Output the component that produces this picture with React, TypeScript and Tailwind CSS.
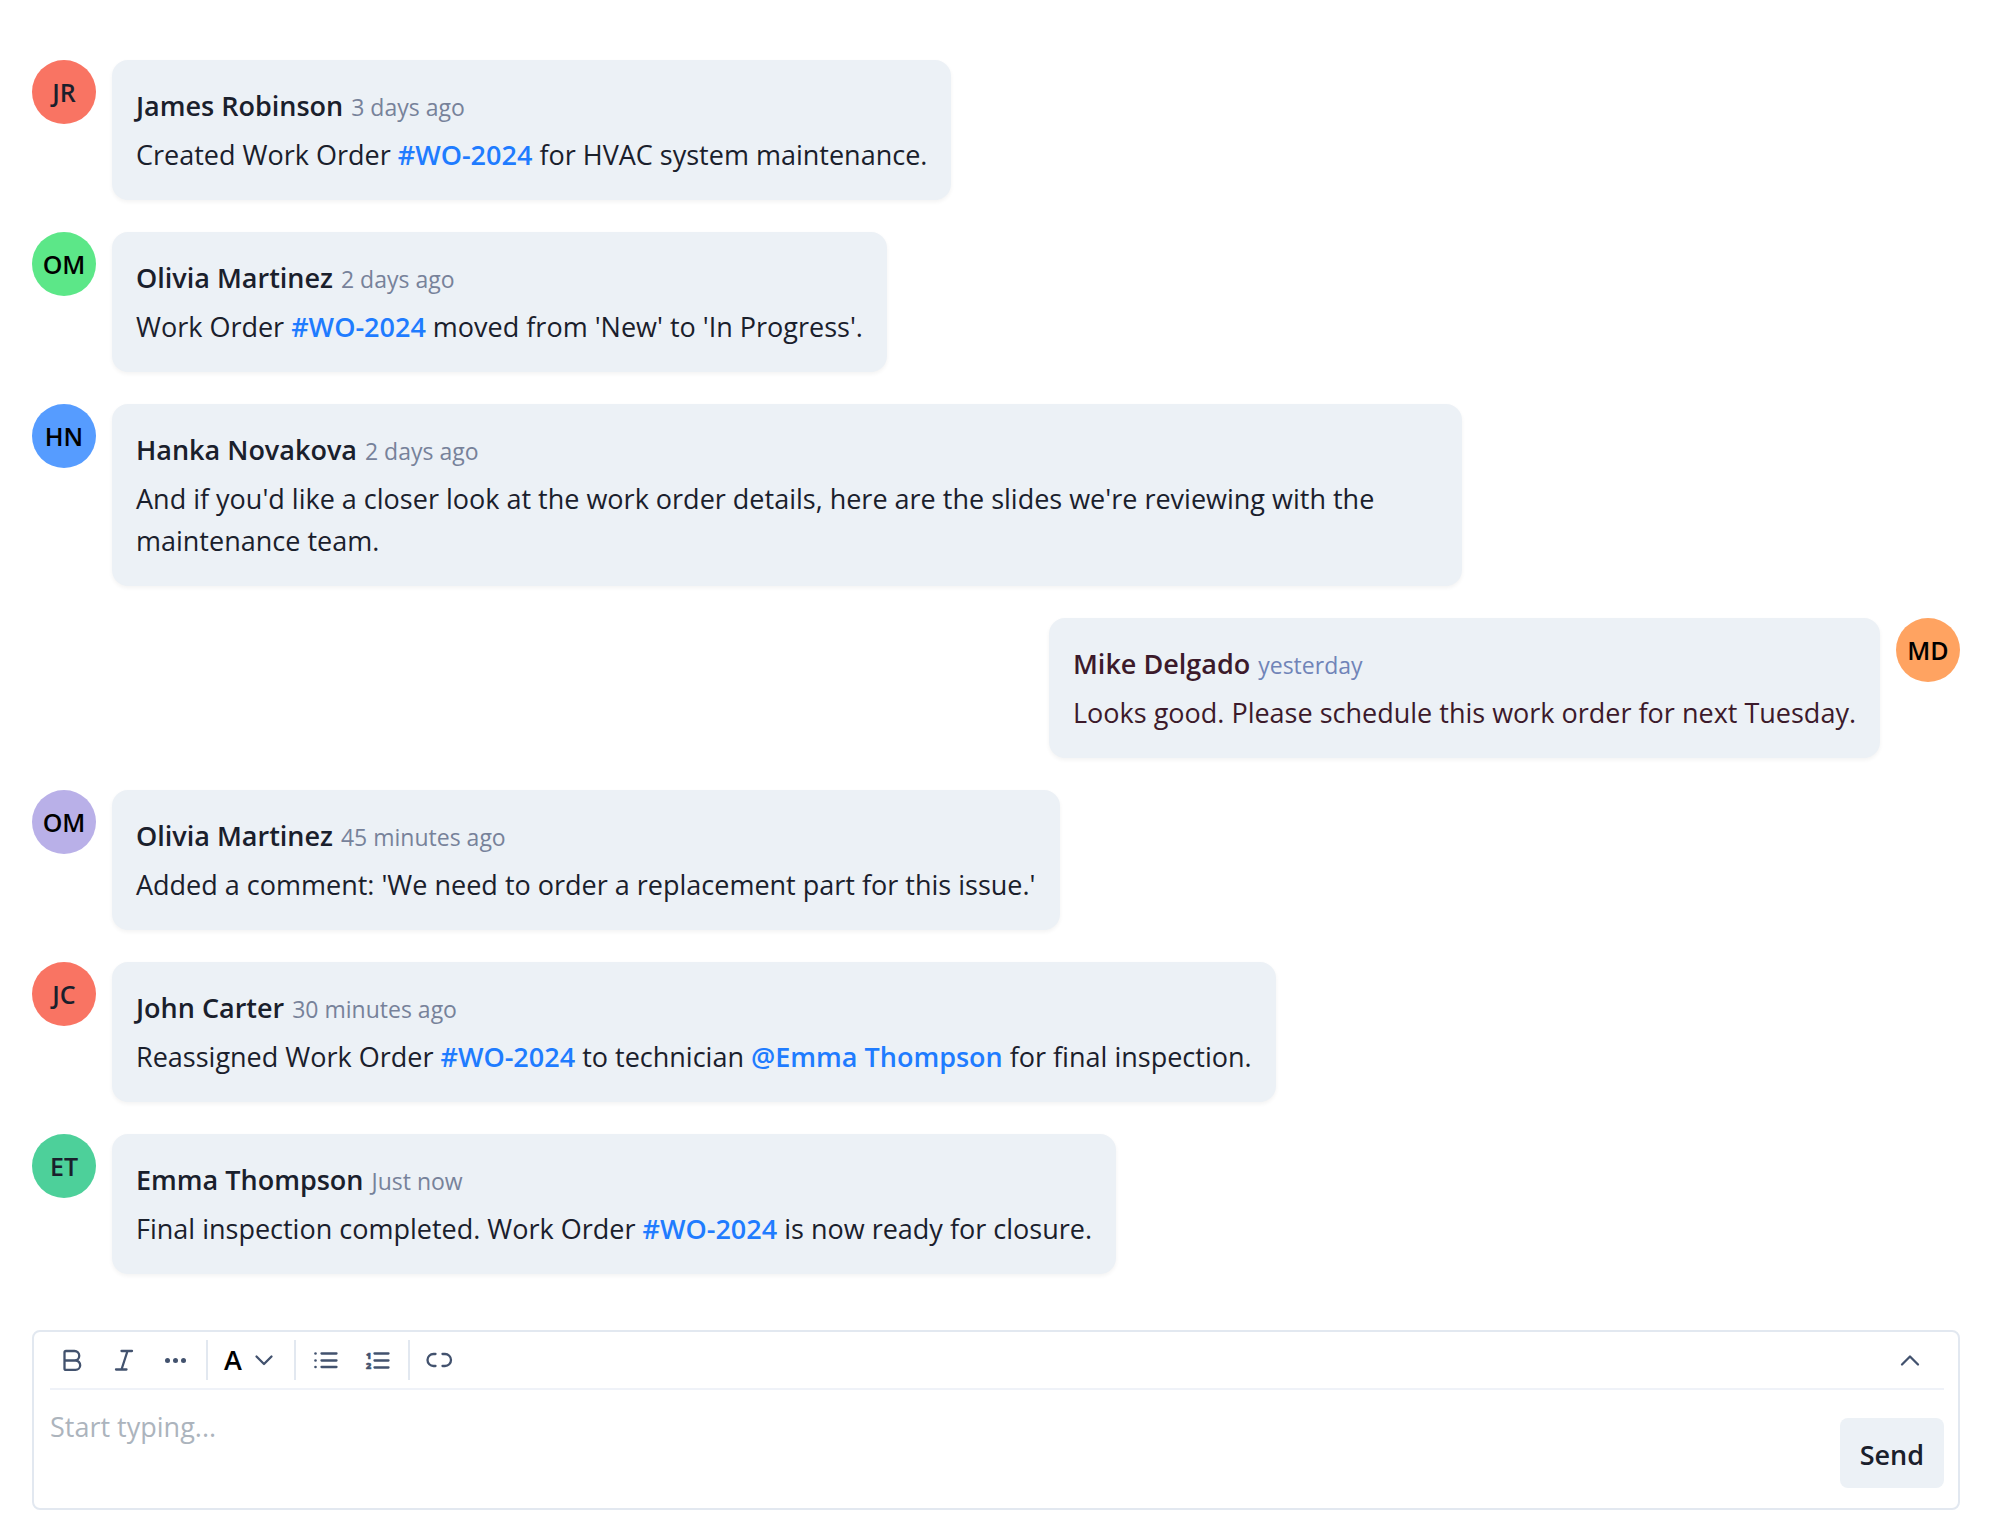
import { useState, type ReactNode } from 'react'
import clsx from 'clsx'

interface Message {
  id: number
  author: string
  initials: string
  time: string
  avatarClass: string
  own?: boolean
  body: ReactNode
}

function Mention({ children }: { children: ReactNode }) {
  return (
    <a href="#" className="font-semibold text-[#1f7cff]">
      {children}
    </a>
  )
}

const messages: Message[] = [
  {
    id: 1,
    author: 'James Robinson',
    initials: 'JR',
    time: '3 days ago',
    avatarClass: 'bg-[#f97463] text-[#1a202c]',
    body: <>Created Work Order <Mention>#WO-2024</Mention> for HVAC system maintenance.</>,
  },
  {
    id: 2,
    author: 'Olivia Martinez',
    initials: 'OM',
    time: '2 days ago',
    avatarClass: 'bg-[#5ce788] text-black',
    body: <>Work Order <Mention>#WO-2024</Mention> moved from 'New' to 'In Progress'.</>,
  },
  {
    id: 3,
    author: 'Hanka Novakova',
    initials: 'HN',
    time: '2 days ago',
    avatarClass: 'bg-[#569cff] text-black',
    body: <>And if you'd like a closer look at the work order details, here are the slides we're reviewing with the maintenance team.</>,
  },
  {
    id: 4,
    author: 'Mike Delgado',
    initials: 'MD',
    time: 'yesterday',
    avatarClass: 'bg-[#ffa361] text-black',
    own: true,
    body: <>Looks good. Please schedule this work order for next Tuesday.</>,
  },
  {
    id: 5,
    author: 'Olivia Martinez',
    initials: 'OM',
    time: '45 minutes ago',
    avatarClass: 'bg-[#b9b0e8] text-black',
    body: <>Added a comment: 'We need to order a replacement part for this issue.'</>,
  },
  {
    id: 6,
    author: 'John Carter',
    initials: 'JC',
    time: '30 minutes ago',
    avatarClass: 'bg-[#f97463] text-[#1a202c]',
    body: <>Reassigned Work Order <Mention>#WO-2024</Mention> to technician <Mention>@Emma Thompson</Mention> for final inspection.</>,
  },
  {
    id: 7,
    author: 'Emma Thompson',
    initials: 'ET',
    time: 'Just now',
    avatarClass: 'bg-[#4dd09a] text-[#1a202c]',
    body: <>Final inspection completed. Work Order <Mention>#WO-2024</Mention> is now ready for closure.</>,
  },
]

function MessageRow({ message }: { message: Message }) {
  const { author, initials, time, avatarClass, own, body } = message

  return (
    <li className={clsx('flex items-start gap-4', own && 'flex-row-reverse')}>
      <div className={clsx('flex size-16 shrink-0 items-center justify-center rounded-full text-[25px] font-semibold', avatarClass)}>
        {initials}
      </div>
      <div
        className={clsx(
          'max-w-[70%] rounded-2xl bg-[#ecf1f6] p-6 shadow-[0_2px_4px_rgba(0,0,0,0.05)]',
          own ? 'text-[#3c1a2b]' : 'text-[#1a202c]'
        )}
      >
        <div className="mb-1.5 flex h-11 items-baseline gap-2 leading-11">
          <span className="font-semibold">{author}</span>
          <span className={clsx('text-[23px]', own ? 'text-[#7084b8]' : 'text-[#77829a]')}>{time}</span>
        </div>
        <p>{body}</p>
      </div>
    </li>
  )
}

function Icon({ children, width = 28 }: { children: ReactNode; width?: number }) {
  return (
    <svg
      width={width}
      height={28}
      viewBox={`0 0 ${width} 28`}
      fill="none"
      stroke="currentColor"
      strokeWidth={2}
      strokeLinecap="round"
      strokeLinejoin="round"
      aria-hidden="true"
    >
      {children}
    </svg>
  )
}

function ToolButton({ label, onClick, children }: { label: string; onClick?: () => void; children: ReactNode }) {
  return (
    <button
      type="button"
      aria-label={label}
      onClick={onClick}
      className="flex size-10 items-center justify-center rounded text-[#42526e] hover:bg-slate-100"
    >
      {children}
    </button>
  )
}

function Divider() {
  return <div className="h-10 w-0.5 bg-[#e2e8f0]" />
}

function Composer() {
  const [text, setText] = useState('')
  const [collapsed, setCollapsed] = useState(false)

  return (
    <form
      className="rounded-lg border-2 border-[#e2e8f0] pr-3.5 pb-5 pl-4"
      onSubmit={e => e.preventDefault()}
    >
      {/* Toolbar */}
      <div className="flex h-[58px] items-center gap-2.5 border-b-2 border-[#eff2f8] pr-3.5 pl-0.5">
        <div className="flex gap-3">
          <ToolButton label="Bold">
            <Icon>
              <path
                strokeWidth={2.3}
                d="M6.5 14.5V6.5Q6.5 5 8 5h8.5a4.7 4.7 0 0 1 0 9.5M6.5 14.5H17.5a4.7 4.7 0 0 1 0 9.4H8Q6.5 23.9 6.5 22.4V14.5H17"
              />
            </Icon>
          </ToolButton>
          <ToolButton label="Italic">
            <Icon>
              <path strokeWidth={2.3} d="M11.5 5H22M6 23.5H16.5M17.5 5L11.5 23.5" />
            </Icon>
          </ToolButton>
          <ToolButton label="More formatting">
            <Icon>
              <g fill="currentColor" stroke="none">
                <circle cx="5.5" cy="14.5" r="2.5" />
                <circle cx="13.5" cy="14.5" r="2.5" />
                <circle cx="21.5" cy="14.5" r="2.5" />
              </g>
            </Icon>
          </ToolButton>
        </div>
        <Divider />
        <button type="button" aria-label="Text color" className="flex h-10 w-[66px] items-center gap-3 px-1.5">
          <span className="text-[27px] leading-10 font-semibold text-black">A</span>
          <span className="text-[#42526e]">
            <Icon width={20}>
              <path strokeWidth={2.3} d="M2.5 10.5L10 18L17.5 10.5" />
            </Icon>
          </span>
        </button>
        <Divider />
        <div className="flex gap-3">
          <ToolButton label="Bullet list">
            <Icon>
              <path strokeWidth={2.3} d="M9.5 7.5H24.5M9.5 14.5H24.5M9.5 21H24.5" />
              <g fill="currentColor" stroke="none">
                <circle cx="3.5" cy="7.5" r="1.3" />
                <circle cx="3.5" cy="14.5" r="1.3" />
                <circle cx="3.5" cy="21" r="1.3" />
              </g>
            </Icon>
          </ToolButton>
          <ToolButton label="Numbered list">
            <Icon>
              <path strokeWidth={2.3} d="M10.5 7.5H24.5M10.5 14.5H24.5M10.5 21.5H24.5" />
              <g fill="currentColor" stroke="currentColor" strokeWidth="0.6" fontSize="9" fontWeight="800">
                <text x="2" y="13">1</text>
                <text x="2" y="23">2</text>
              </g>
            </Icon>
          </ToolButton>
        </div>
        <Divider />
        <ToolButton label="Link">
          <Icon>
            <path strokeWidth={2.3} d="M9.5 8H7.5a6 6 0 0 0 0 12h2M16.500 8H19a6 6 0 0 1 0 12h-2.500" />
          </Icon>
        </ToolButton>
        <div className="ml-auto">
          <ToolButton label="Collapse toolbar" onClick={() => setCollapsed(!collapsed)}>
            <Icon>
              <path strokeWidth={2.3} d="M6 18.5L14 10.5L22 18.5" />
            </Icon>
          </ToolButton>
        </div>
      </div>

      <div className="flex items-start gap-4">
        <textarea
          aria-label="Message"
          placeholder="Start typing..."
          rows={2}
          value={text}
          onChange={e => setText(e.target.value)}
          className="mt-4 block h-20 flex-1 resize-none text-[#1a202c] outline-none placeholder:text-[#acb4bd]"
        />
        <button type="submit" className="mt-7 h-[70px] rounded-lg bg-[#ecf1f6] px-5 pt-1 font-semibold text-[#1a202c]">
          Send
        </button>
      </div>
    </form>
  )
}

export default function App() {
  return (
    <main className="bg-white px-8 pt-[60px] pb-6 font-['Segoe_UI','Open_Sans',sans-serif] text-[27px] leading-[42px]">
      <ul className="mb-14 flex flex-col gap-8">
        {messages.map(message => (
          <MessageRow key={message.id} message={message} />
        ))}
      </ul>
      <Composer />
    </main>
  )
}
